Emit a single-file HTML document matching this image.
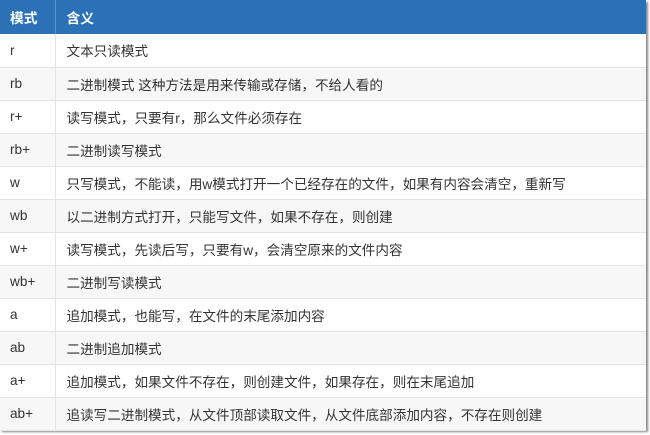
<!DOCTYPE html>
<html><head><meta charset="utf-8"><style>
html,body{margin:0;padding:0;background:#fff;width:650px;height:435px;overflow:hidden}
.t{position:absolute;left:0;top:0;width:646px;height:430px;box-shadow:2px 2px 2px #888;font-family:"Liberation Sans","Noto Sans CJK SC",sans-serif;font-size:13.6px;color:#333}
table{border-collapse:collapse;width:646px}
td,th{padding:0;text-align:left;height:33px;border-bottom:1px solid #e4e4e4;box-sizing:border-box}
td:first-child,th:first-child{width:55px;padding-left:10px;border-right:1px solid #e4e4e4}
td+td,th+th{padding-left:11px}
th{background:#2b71b6;color:#fff;height:34px;font-weight:bold;border-bottom:none;font-size:13.8px;border-right-color:#5b93cc!important}
tr:nth-child(odd) td{background:#f7f7f7}
tr:nth-child(even) td{background:#fff}
</style></head><body>
<div class="t"><table>
<tr><th>模式</th><th>含义</th></tr>
<tr><td>r</td><td>文本只读模式</td></tr>
<tr><td>rb</td><td>二进制模式 这种方法是用来传输或存储，不给人看的</td></tr>
<tr><td>r+</td><td>读写模式，只要有r，那么文件必须存在</td></tr>
<tr><td>rb+</td><td>二进制读写模式</td></tr>
<tr><td>w</td><td>只写模式，不能读，用w模式打开一个已经存在的文件，如果有内容会清空，重新写</td></tr>
<tr><td>wb</td><td>以二进制方式打开，只能写文件，如果不存在，则创建</td></tr>
<tr><td>w+</td><td>读写模式，先读后写，只要有w，会清空原来的文件内容</td></tr>
<tr><td>wb+</td><td>二进制写读模式</td></tr>
<tr><td>a</td><td>追加模式，也能写，在文件的末尾添加内容</td></tr>
<tr><td>ab</td><td>二进制追加模式</td></tr>
<tr><td>a+</td><td>追加模式，如果文件不存在，则创建文件，如果存在，则在末尾追加</td></tr>
<tr><td>ab+</td><td>追读写二进制模式，从文件顶部读取文件，从文件底部添加内容，不存在则创建</td></tr>
</table></div>
</body></html>
